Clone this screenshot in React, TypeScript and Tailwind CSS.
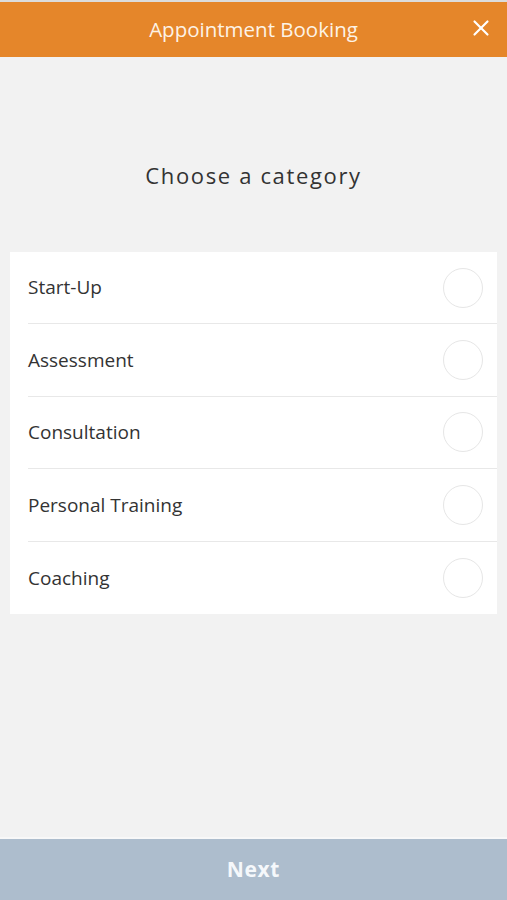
import { X } from "lucide-react";

const CATEGORIES = ["Start-Up", "Assessment", "Consultation", "Personal Training", "Coaching"];

export default function App() {
  return (
    <div
      className="flex h-[900px] w-full flex-col bg-[#f2f2f2]"
      style={{ fontFamily: '"Open Sans", "Liberation Sans", sans-serif' }}
    >
      {/* Header */}
      <header className="relative flex h-[57px] shrink-0 items-center justify-center border-t-2 border-[#dcdcdc] bg-[#e5862a]">
        <h1 className="text-[20.5px] text-[#fdf3e6]">Appointment Booking</h1>
        <button className="absolute right-[13px] top-[13px] text-white" aria-label="Close">
          <X className="h-[26px] w-[26px]" strokeWidth={2} />
        </button>
      </header>

      {/* Content */}
      <main className="flex-1">
        <h2 className="mt-[102px] text-center text-[22px] tracking-[0.075em] text-[#333]">Choose a category</h2>

        <ul className="mx-[10px] mt-[60px] bg-white pl-[18px]">
          {CATEGORIES.map((c, i) => (
            <li
              key={c}
              className={
                "flex h-[72.4px] items-center justify-between pr-[14px] " +
                (i < CATEGORIES.length - 1 ? "border-b border-[#e8e8e8]" : "")
              }
            >
              <span className="text-[19px] text-[#333]">{c}</span>
              <span className="h-[40px] w-[40px] rounded-full border border-[#e6e6e6]" />
            </li>
          ))}
        </ul>
      </main>

      {/* Footer */}
      <footer className="flex h-[63px] shrink-0 items-center justify-center border-t-2 border-[#f8f8f8] bg-[#adbdcd]">
        <span className="text-[21px] font-bold tracking-[0.03em] text-[#f5f8fb]">Next</span>
      </footer>
    </div>
  );
}
